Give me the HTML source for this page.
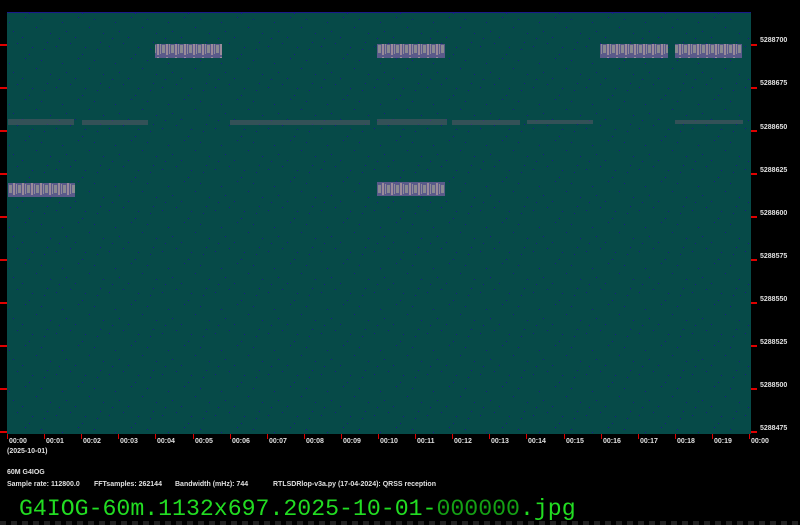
<!DOCTYPE html>
<html><head><meta charset="utf-8"><style>
html,body{margin:0;padding:0;background:#000;width:800px;height:525px;overflow:hidden}
svg{display:block}
.t{font-family:"Liberation Sans",sans-serif;font-weight:bold;font-size:7px;fill:#e0e0e0}
.f{font-family:"Liberation Mono",monospace;font-size:23.2px;fill:#22dd22}
</style></head><body>
<svg width="800" height="525" viewBox="0 0 800 525" xmlns="http://www.w3.org/2000/svg">
<defs>
<pattern id="n" width="53" height="41" patternUnits="userSpaceOnUse">
<rect x="3" y="5" width="1" height="1" fill="#1a1a8a"/><rect x="17" y="2" width="1" height="1" fill="#1a1a8a"/>
<rect x="29" y="13" width="1" height="1" fill="#1a1a8a"/><rect x="44" y="8" width="1" height="1" fill="#1a1a8a"/>
<rect x="9" y="22" width="1" height="1" fill="#1a1a8a"/><rect x="36" y="27" width="1" height="1" fill="#1a1a8a"/>
<rect x="50" y="33" width="1" height="1" fill="#1a1a8a"/><rect x="22" y="37" width="1" height="1" fill="#1a1a8a"/>
<rect x="13" y="31" width="1" height="1" fill="#1a1a8a"/><rect x="41" y="19" width="1" height="1" fill="#1a1a8a"/>
<rect x="25" y="17" width="1" height="1" fill="#1a1a8a"/><rect x="6" y="38" width="1" height="1" fill="#1a1a8a"/>
<rect x="47" y="1" width="1" height="1" fill="#1a1a8a"/><rect x="32" y="6" width="1" height="1" fill="#1a1a8a"/>
</pattern>
<pattern id="s" width="9" height="14" patternUnits="userSpaceOnUse">
<rect y="0" width="9" height="14" fill="#5a5a8a"/><rect x="0" y="3" width="3" height="8" fill="#8a8a90"/><rect x="4" y="1" width="2" height="12" fill="#9a8a9a"/><rect x="7" y="2" width="1" height="10" fill="#908a98"/>
</pattern>
<pattern id="chk" width="11" height="4" patternUnits="userSpaceOnUse"><rect width="6" height="4" fill="#222"/></pattern>
</defs>
<rect x="7" y="12" width="744" height="422" fill="#064a48"/>
<rect x="7" y="12" width="744" height="422" fill="url(#n)"/>
<rect x="7" y="12" width="744" height="1" fill="#1a1a8a"/>
<g>
<rect x="155" y="44" width="67" height="14" fill="url(#s)"/>
<rect x="377" y="44" width="68" height="14" fill="url(#s)"/>
<rect x="600" y="44" width="68" height="14" fill="url(#s)"/>
<rect x="675" y="44" width="67" height="14" fill="url(#s)"/>
<rect x="8" y="183" width="67" height="14" fill="url(#s)"/>
<rect x="377" y="182" width="68" height="14" fill="url(#s)"/>
</g>
<g fill="#6a5a6a" opacity="0.45">
<rect x="8" y="119" width="66" height="6"/><rect x="82" y="120" width="66" height="5"/>
<rect x="230" y="120" width="140" height="5"/><rect x="377" y="119" width="70" height="6"/>
<rect x="452" y="120" width="68" height="5"/><rect x="527" y="120" width="66" height="4"/>
<rect x="675" y="120" width="68" height="4"/>
</g>
<g fill="#e00000">
<rect x="0" y="44" width="7" height="2"/><rect x="0" y="87" width="7" height="2"/><rect x="0" y="130" width="7" height="2"/>
<rect x="0" y="173" width="7" height="2"/><rect x="0" y="216" width="7" height="2"/><rect x="0" y="259" width="7" height="2"/>
<rect x="0" y="302" width="7" height="2"/><rect x="0" y="345" width="7" height="2"/><rect x="0" y="388" width="7" height="2"/>
<rect x="0" y="431" width="7" height="2"/>
<rect x="751" y="44" width="6" height="2"/><rect x="751" y="87" width="6" height="2"/><rect x="751" y="130" width="6" height="2"/>
<rect x="751" y="173" width="6" height="2"/><rect x="751" y="216" width="6" height="2"/><rect x="751" y="259" width="6" height="2"/>
<rect x="751" y="302" width="6" height="2"/><rect x="751" y="345" width="6" height="2"/><rect x="751" y="388" width="6" height="2"/>
<rect x="751" y="431" width="6" height="2"/>
</g>
<g class="t">
<text x="760" y="42">5288700</text><text x="760" y="85">5288675</text><text x="760" y="129">5288650</text>
<text x="760" y="172">5288625</text><text x="760" y="215">5288600</text><text x="760" y="258">5288575</text>
<text x="760" y="301">5288550</text><text x="760" y="344">5288525</text><text x="760" y="387">5288500</text>
<text x="760" y="430">5288475</text>
</g>
<g fill="#e00000">
<rect x="7" y="434" width="1" height="5"/><rect x="44" y="434" width="1" height="5"/><rect x="81" y="434" width="1" height="5"/>
<rect x="118" y="434" width="1" height="5"/><rect x="155" y="434" width="1" height="5"/><rect x="193" y="434" width="1" height="5"/>
<rect x="230" y="434" width="1" height="5"/><rect x="267" y="434" width="1" height="5"/><rect x="304" y="434" width="1" height="5"/>
<rect x="341" y="434" width="1" height="5"/><rect x="378" y="434" width="1" height="5"/><rect x="415" y="434" width="1" height="5"/>
<rect x="452" y="434" width="1" height="5"/><rect x="489" y="434" width="1" height="5"/><rect x="526" y="434" width="1" height="5"/>
<rect x="564" y="434" width="1" height="5"/><rect x="601" y="434" width="1" height="5"/><rect x="638" y="434" width="1" height="5"/>
<rect x="675" y="434" width="1" height="5"/><rect x="712" y="434" width="1" height="5"/><rect x="749" y="434" width="1" height="5"/>
</g>
<g class="t">
<text x="9" y="443">00:00</text><text x="46" y="443">00:01</text><text x="83" y="443">00:02</text>
<text x="120" y="443">00:03</text><text x="157" y="443">00:04</text><text x="195" y="443">00:05</text>
<text x="232" y="443">00:06</text><text x="269" y="443">00:07</text><text x="306" y="443">00:08</text>
<text x="343" y="443">00:09</text><text x="380" y="443">00:10</text><text x="417" y="443">00:11</text>
<text x="454" y="443">00:12</text><text x="491" y="443">00:13</text><text x="528" y="443">00:14</text>
<text x="566" y="443">00:15</text><text x="603" y="443">00:16</text><text x="640" y="443">00:17</text>
<text x="677" y="443">00:18</text><text x="714" y="443">00:19</text><text x="751" y="443">00:00</text>
<text x="7" y="453">(2025-10-01)</text>
<text x="7" y="474">60M G4IOG</text>
<text x="7" y="486">Sample rate: 112800.0</text>
<text x="94" y="486">FFTsamples: 262144</text>
<text x="175" y="486">Bandwidth (mHz): 744</text>
<text x="273" y="486">RTLSDRlop-v3a.py (17-04-2024): QRSS reception</text>
</g>
<text class="f" x="19" y="515">G4IOG-60m.1132x697.2025-10-01-<tspan fill="#14a014">000000</tspan>.jpg</text>
<rect x="0" y="521" width="800" height="4" fill="url(#chk)"/>
</svg>
</body></html>
